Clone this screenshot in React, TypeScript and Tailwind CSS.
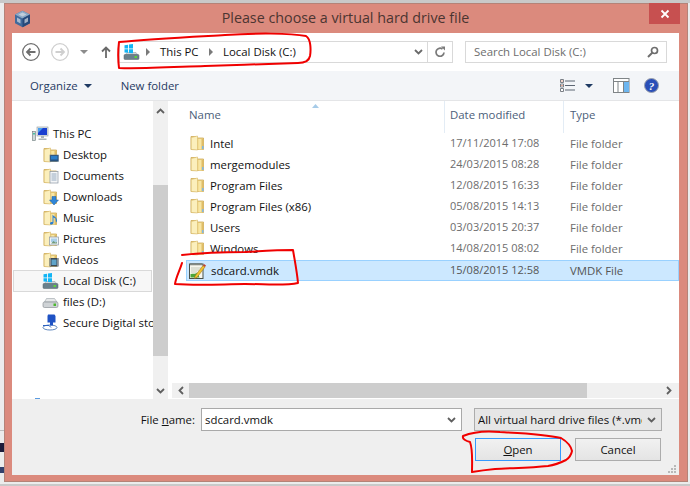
import React from "react";

const Folder = ({ children }: { children?: React.ReactNode }) => (
  <svg width="16" height="16" viewBox="0 0 16 16" className="shrink-0">
    <path d="M1 1.5h5l1 1.5h6.5v11.5H1z" fill="#f0d684" stroke="#cdaa58" strokeWidth="0.8" />
    <path d="M1.2 2.5 7.5 1v14l-6.3-.5z" fill="#fbefbc" stroke="#d8b968" strokeWidth="0.6" />
    <path d="M8.5 4h4v10.5h-4z" fill="#f8e6a4" />
    <path d="M11.5 4h2v10.5h-2z" fill="#dfbd68" />
    {children}
  </svg>
);

const PlainFolder = () => (
  <Folder>
    <path d="M12 11h1.5v3H12z" fill="#7fb8e6" />
  </Folder>
);

const DesktopFolder = () => (
  <Folder>
    <rect x="7" y="8" width="8.5" height="6.5" fill="#26517f" stroke="#56708a" strokeWidth="0.6" />
    <rect x="8" y="9" width="6.5" height="3.5" fill="#2b7ec9" />
  </Folder>
);
const DocsFolder = () => (
  <Folder>
    <rect x="7" y="3.5" width="8" height="11.5" fill="#f4f6f8" stroke="#8a96a3" strokeWidth="0.7" />
    <path d="M8.5 6h5M8.5 8h5M8.5 10h5M8.5 12h5" stroke="#8aa0b8" strokeWidth="0.9" />
  </Folder>
);
const DownFolder = () => (
  <Folder>
    <path d="M9 7.5h4v3.5h2.5L11 16l-4.5-5H9z" fill="#2f86d8" stroke="#1e5fa6" strokeWidth="0.5" />
  </Folder>
);
const MusicFolder = () => (
  <Folder>
    <path d="M9.5 4.5c1 2 4.5 2.5 4.5 6 0 1-.5 1.5-1 2l-.5-4-2-1V13c0 1.5-3.5 2.2-3.5.5 0-1.3 1.5-1.7 2.5-1.5z" fill="#2a7fd4" />
  </Folder>
);
const PicFolder = () => (
  <Folder>
    <rect x="6.5" y="6" width="9" height="8" fill="#eef2f5" stroke="#8a96a3" strokeWidth="0.7" />
    <rect x="8" y="7.5" width="6" height="3.5" fill="#a9cfe9" />
    <path d="M8 12.5l2.5-2.5 2 1.5 1.5-.5v1.5z" fill="#6f9a7e" />
  </Folder>
);
const VidFolder = () => (
  <Folder>
    <rect x="6.5" y="6" width="9" height="8.5" fill="#3d4a55" />
    <rect x="8.5" y="7.5" width="5" height="5.5" fill="#5fa4c9" />
    <path d="M7 7h1M7 9h1M7 11h1M7 13h1M14 7h1M14 9h1M14 11h1M14 13h1" stroke="#e6e6e6" strokeWidth="0.9" />
  </Folder>
);

const DriveBase = () => (
  <>
    <path d="M2.5 10.5 4 8.5h9l1.5 2z" fill="#cfd6da" stroke="#8d979d" strokeWidth="0.5" />
    <rect x="1" y="10.5" width="15" height="5" rx="1" fill="#69808c" stroke="#55636b" strokeWidth="0.5" />
    <rect x="11.5" y="12" width="2.5" height="2" fill="#5fd13d" />
  </>
);
const SysDrive = () => (
  <svg width="17" height="17" viewBox="0 0 17 17" className="shrink-0">
    <DriveBase />
    <path d="M1.5 1.2l3.6-.5v3.8H1.5zM6 .6l4-.6v4.5H6zM1.5 5.3h3.6v3.5L1.5 8.4zM6 5.3h4v4L6 8.9z" fill="#12b5f5" />
  </svg>
);
const DataDrive = () => (
  <svg width="17" height="16" viewBox="0 0 17 16" className="shrink-0">
    <path d="M2.5 8 4.5 4.5h8L15 8z" fill="#e6e8e9" stroke="#9aa2a7" strokeWidth="0.6" />
    <rect x="1" y="8" width="15" height="5.5" rx="1.5" fill="#cfd3d6" stroke="#7d858a" strokeWidth="0.6" />
    <rect x="11.5" y="9.5" width="2.5" height="2.5" fill="#4cb82e" />
  </svg>
);
const SdIcon = () => (
  <svg width="17" height="17" viewBox="0 0 17 17" className="shrink-0">
    <ellipse cx="8" cy="13.5" rx="7" ry="2.5" fill="none" stroke="#4c78b5" strokeWidth="0.9" />
    <path d="M6 .5h6.5L13.5 2v6.5H11v3H8v-3H5.5V2z" fill="#1f52c4" />
    <path d="M1 11.5h6l2 2" stroke="#2d62c0" strokeWidth="1" fill="none" />
  </svg>
);
const PcIcon = () => (
  <svg width="17" height="16" viewBox="0 0 17 16" className="shrink-0">
    <rect x="0.5" y="5.5" width="3" height="9" fill="#cfd8d8" stroke="#69797a" strokeWidth="0.6" />
    <rect x="1" y="7" width="2" height="1.5" fill="#49c1a4" />
    <rect x="5" y="1" width="11" height="9" fill="#e4e8ea" stroke="#8b969c" strokeWidth="0.6" />
    <rect x="6" y="2" width="9" height="7" fill="#1a3fd0" />
    <path d="M6 2h5L6 7z" fill="#4aa0ee" />
    <path d="M9 10h3v2H9zM6.5 12.5h8V14h-8z" fill="#a9b3b8" />
  </svg>
);
const FileIcon = () => (
  <svg width="18" height="18" viewBox="0 0 18 18" className="shrink-0">
    <rect x="1.5" y="2" width="13.5" height="14.5" fill="#f7f7ee" stroke="#48504a" strokeWidth="1" />
    <path d="M3 1v2.5M5 1v2.5M7 1v2.5M9 1v2.5M11 1v2.5M13 1v2.5" stroke="#5a625c" strokeWidth="0.8" />
    <path d="M3 6h10M3 8h8M3 10h6" stroke="#b9bfae" strokeWidth="0.8" />
    <path d="M2.5 15.5V12c3-.5 6 0 7-1.5l2 5z" fill="#4da53a" />
    <path d="M7 14 15 3.5 17 5 9 15.500l-2.500 1z" fill="#f1c232" stroke="#8d6b15" strokeWidth="0.5" />
    <path d="M15 3.5l1-1.5 2 1.5L17 5z" fill="#c4402f" />
  </svg>
);

const Cube = () => (
  <svg width="17" height="18" viewBox="0 0 17 18">
    <path d="M8.5.8 16 4.5v8.8l-7.5 4-7.500-4V4.500z" fill="#3f6a9c" />
    <path d="M8.5.8 16 4.5l-7.5 4-7.500-4z" fill="#8ca9c6" />
    <path d="M8.5 8.5v8.8l7.500-4V4.500z" fill="#26497a" />
    <path d="M4.5 4.5 8.5 2.5l4 2-4 2zM3 7.5l3.5 2v4L3 11.5zM10.5 9.5l3.500-2v4l-3.500 2z" fill="#d5dde6" opacity="0.7" />
  </svg>
);

const ChevR = () => (
  <svg width="6" height="8" viewBox="0 0 6 8" className="shrink-0">
    <path d="M1 0l4 4-4 4z" fill="#7a7a7a" />
  </svg>
);
const ChevDown = ({ c = "#5f5f5f" }: { c?: string }) => (
  <svg width="9" height="6" viewBox="0 0 9 6" className="shrink-0">
    <path d="M1 1l3.5 3.5L8 1" fill="none" stroke={c} strokeWidth="1.8" />
  </svg>
);
const Tri = ({ c = "#1f3a63" }: { c?: string }) => (
  <svg width="8" height="4" viewBox="0 0 8 4" className="shrink-0">
    <path d="M0 0h8L4 4z" fill={c} />
  </svg>
);

const navItems: [React.ReactNode, string][] = [
  [<DesktopFolder />, "Desktop"],
  [<DocsFolder />, "Documents"],
  [<DownFolder />, "Downloads"],
  [<MusicFolder />, "Music"],
  [<PicFolder />, "Pictures"],
  [<VidFolder />, "Videos"],
];

const files = [
  ["Intel", "17/11/2014 17:08"],
  ["mergemodules", "24/03/2015 08:28"],
  ["Program Files", "12/08/2015 16:33"],
  ["Program Files (x86)", "05/08/2015 14:13"],
  ["Users", "03/03/2015 20:37"],
  ["Windows", "14/08/2015 08:02"],
];

export default function App() {
  return (
    <div
      className="relative w-[690px] h-[486px] overflow-hidden bg-[#ececec] pt-[3px] pl-[4px] text-[11.4px] text-[#111111]"
      style={{ fontFamily: '"Open Sans", "Noto Sans", sans-serif' }}
    >
      {/* background window fragments */}
      <div className="absolute left-0 top-0 w-full h-[3px] bg-[#c9c9c9]" />
      <div className="absolute left-0 top-[430px] w-[4px] h-[1px] bg-[#bdbdbd]" />
      <div className="absolute left-0 top-[443px] w-[4px] h-[9px] bg-[#1b1b3a]" />
      <div className="absolute left-0 top-[467px] w-[4px] h-[6px] bg-[#33406b]" />
      <div className="absolute left-0 bottom-0 w-full h-[2px] bg-[#c9c9c9]" />

      <div className="relative w-[684px] h-[479px] border border-[#b48378] bg-[#db8a7d] flex flex-col pl-[7px] pr-[8px] pb-[6px]">
        {/* title bar */}
        <div className="relative h-[29px] shrink-0 flex items-center justify-center text-[14.3px] text-[#4b3531]">
          <div className="absolute left-[2px] top-[6px]">
            <Cube />
          </div>
          <span className="pb-[2px]">Please choose a virtual hard drive file</span>
          <div className="absolute right-[-1px] top-[-1px] w-[31px] h-[21px] bg-[#c75050] flex items-center justify-center">
            <svg width="10" height="10" viewBox="0 0 10 10">
              <path d="M1.5 1.5l7 7M8.5 1.5l-7 7" stroke="#fff" strokeWidth="1.8" />
            </svg>
          </div>
        </div>

        <div className="flex-1 flex flex-col bg-white min-h-0">
          {/* address row */}
          <div className="h-[38px] shrink-0 flex items-start pt-[8px]">
            <div className="w-[107px] shrink-0 h-[22px] flex items-center pl-[10px]">
              <svg width="18" height="18" viewBox="0 0 18 18" className="shrink-0">
                <circle cx="9" cy="9" r="8.3" fill="#fff" stroke="#6e6e6e" strokeWidth="1.3" />
                <path d="M13.5 9h-8M8.5 5.5 5 9l3.5 3.5" fill="none" stroke="#6e6e6e" strokeWidth="1.8" />
              </svg>
              <svg width="18" height="18" viewBox="0 0 18 18" className="shrink-0 ml-[11px]">
                <circle cx="9" cy="9" r="8.3" fill="#fff" stroke="#cfcfcf" strokeWidth="1.3" />
                <path d="M4.5 9h8M9.5 5.5 13 9l-3.5 3.5" fill="none" stroke="#cfcfcf" strokeWidth="1.8" />
              </svg>
              <div className="ml-[11px]">
                <Tri c="#8c8c8c" />
              </div>
              <svg width="10" height="12" viewBox="0 0 10 12" className="shrink-0 ml-[13px]">
                <path d="M5 12V1.5M1 5.5l4-4 4 4" fill="none" stroke="#6a6a6a" strokeWidth="1.8" />
              </svg>
            </div>
            <div className="w-[334px] h-[22px] shrink-0 border border-[#d9d9d9] flex items-center pl-[3px]">
              <SysDrive />
              <div className="ml-[5px]"><ChevR /></div>
              <span className="ml-[9px] w-[48px]">This PC</span>
              <ChevR />
              <span className="ml-[9px]">Local Disk (C:)</span>
              <div className="ml-auto flex items-center h-full">
                <ChevDown c="#6a6a6a" />
                <div className="ml-[4px] w-[25px] h-full border-l border-[#d9d9d9] flex items-center justify-center">
                  <svg width="12" height="12" viewBox="0 0 12 12">
                    <path d="M10 6.5a4 4 0 1 1-1.5-3.4" fill="none" stroke="#7a7a7a" strokeWidth="1.7" />
                    <path d="M7 .5h4v4z" fill="#7a7a7a" />
                  </svg>
                </div>
              </div>
            </div>
            <div className="ml-[12px] w-[202px] h-[22px] shrink-0 border border-[#d9d9d9] flex items-center pl-[8px] pr-[7px] text-[#6d6d6d]">
              <span>Search Local Disk (C:)</span>
              <svg width="12" height="12" viewBox="0 0 12 12" className="ml-auto">
                <circle cx="7.5" cy="4.5" r="3" fill="none" stroke="#6e6e6e" strokeWidth="1.7" />
                <path d="M5.5 6.5 1 11" stroke="#6e6e6e" strokeWidth="2" />
              </svg>
            </div>
          </div>

          {/* toolbar */}
          <div className="h-[30px] shrink-0 bg-[#f3f5f8] border-b border-[#e4e5e7] flex items-center pl-[18px] text-[#1f3a63]">
            <span>Organize</span>
            <div className="ml-[6px]"><Tri /></div>
            <span className="ml-[29px]">New folder</span>
            <div className="ml-auto flex items-center pr-[20px]">
              <svg width="15" height="13" viewBox="0 0 15 13" className="shrink-0">
                <path d="M.5.5h3v3h-3zM.5 5h3v3h-3zM.5 9.5h3v3h-3z" fill="#fff" stroke="#7a7f86" />
                <path d="M5 2h10M5 6.5h10M5 11h10" stroke="#5d6673" strokeWidth="1" />
                <path d="M1.5 1.5h1v1h-1zM1.5 6h1v1h-1z" fill="#d0542f" />
              </svg>
              <div className="ml-[10px]"><Tri /></div>
              <svg width="17" height="15" viewBox="0 0 17 15" className="shrink-0 ml-[20px]">
                <rect x=".5" y=".5" width="15.5" height="14" fill="#fff" stroke="#7f8487" />
                <path d="M.5 3.5H16M5 3.5V14.500M10.500 3.500v11" stroke="#7f8487" />
                <rect x="11" y="4" width="5" height="10" fill="#6db6f0" />
              </svg>
              <svg width="15" height="15" viewBox="0 0 15 15" className="shrink-0 ml-[14px]">
                <circle cx="7.5" cy="7.5" r="7" fill="#2a4fb8" stroke="#9ba1ac" strokeWidth="1" />
                <text x="7.5" y="11.5" textAnchor="middle" fontSize="11" fontStyle="italic" fontWeight="700" fill="#fff" fontFamily="Liberation Serif">?</text>
              </svg>
            </div>
          </div>

          {/* panes */}
          <div className="h-[298px] shrink-0 flex">
            {/* nav */}
            <div className="relative w-[141px] shrink-0 pt-[22px] overflow-hidden">
              <div className="h-[21px] flex items-center pl-[20px] gap-[4px]">
                <PcIcon />
                <span>This PC</span>
              </div>
              {navItems.map(([icon, label]) => (
                <div key={label} className="h-[21px] flex items-center pl-[31px] gap-[4px]">
                  {icon}
                  <span>{label}</span>
                </div>
              ))}
              <div className="h-[22px] -mb-[1px] ml-[1px] mr-[1px] flex items-center pl-[28px] gap-[4px] border border-[#d9d9d9] bg-[#f7f7f7]">
                <SysDrive />
                <span>Local Disk (C:)</span>
              </div>
              <div className="h-[21px] flex items-center pl-[30px] gap-[4px]">
                <DataDrive />
                <span>files (D:)</span>
              </div>
              <div className="h-[21px] flex items-center pl-[30px] gap-[4px] whitespace-nowrap">
                <SdIcon />
                <span>Secure Digital storage</span>
              </div>
              <div className="absolute left-[23px] bottom-0 w-[5px] h-[1px] bg-[#5a9be0]" />
            </div>
            {/* nav scrollbar */}
            <div className="w-[15px] shrink-0 bg-[#f0f0f0] flex flex-col items-center">
              <div className="h-[84px] shrink-0 w-full flex justify-center pt-[7px]">
                <svg width="9" height="6" viewBox="0 0 9 6"><path d="M1 5l3.5-3.5L8 5" fill="none" stroke="#606060" strokeWidth="1.8" /></svg>
              </div>
              <div className="h-[171px] w-full shrink-0 bg-[#cdcdcd]" />
              <div className="flex-1 flex items-end pb-[5px]"><ChevDown /></div>
            </div>
            {/* file list */}
            <div className="flex-1 min-w-0 ml-[4px] flex flex-col">
              <div className="flex-1 min-h-0 relative">
                <div className="absolute left-[140px] top-[3px]">
                  <svg width="7" height="4" viewBox="0 0 7 4"><path d="M3.5 0 7 4H0z" fill="#a6cbe8" /></svg>
                </div>
                <div className="h-[32px] flex text-[#4c607a]">
                  <div className="w-[272px] pl-[17px] pt-[5px]">Name</div>
                  <div className="w-[119px] pl-[5px] pt-[5px] border-l border-[#e3ecf5]">Date modified</div>
                  <div className="pl-[6px] pt-[5px] border-l border-[#e3ecf5]">Type</div>
                </div>
                {files.map(([n, d]) => (
                  <div key={n} className="h-[21px] flex items-center">
                    <div className="w-[272px] shrink-0 pl-[18px] flex items-center gap-[4px]">
                      <PlainFolder />
                      <span>{n}</span>
                    </div>
                    <div className="w-[120px] shrink-0 pl-[6px] text-[11px] text-[#6d6d6d]">{d}</div>
                    <div className="pl-[6px] text-[#6d6d6d]">File folder</div>
                  </div>
                ))}
                <div className="h-[21px] mt-[1px] ml-[14px] flex items-center border border-[#99d1ff] bg-[#cce8ff]">
                  <div className="w-[257px] shrink-0 pl-[1px] flex items-center gap-[5px]">
                    <FileIcon />
                    <span>sdcard.vmdk</span>
                  </div>
                  <div className="w-[120px] shrink-0 pl-[6px] text-[11px] text-[#555]">15/08/2015 12:58</div>
                  <div className="pl-[6px] text-[#555]">VMDK File</div>
                </div>
              </div>
              <div className="h-[15px] shrink-0 mb-[1px] bg-[#f0f0f0] flex items-center">
                <div className="w-[17px] shrink-0 flex justify-center">
                  <svg width="6" height="9" viewBox="0 0 6 9"><path d="M5 1 1.5 4.500 5 8" fill="none" stroke="#606060" strokeWidth="1.8" /></svg>
                </div>
                <div className="w-[398px] h-full bg-[#cdcdcd]" />
                <div className="flex-1 flex justify-end pr-[7px]">
                  <svg width="6" height="9" viewBox="0 0 6 9"><path d="M1 1l3.5 3.500L1 8" fill="none" stroke="#606060" strokeWidth="1.8" /></svg>
                </div>
              </div>
            </div>
          </div>

          {/* bottom */}
          <div className="relative flex-1 bg-[#efefef] pt-[9px]">
            <div className="flex items-center h-[23px]">
              <div className="w-[183px] shrink-0 text-right">
                File <span className="underline">n</span>ame:
              </div>
              <div className="ml-[6px] w-[261px] h-[23px] shrink-0 bg-white border border-[#a9a9a9] flex items-center pl-[3px] pr-[5px]">
                <span>sdcard.vmdk</span>
                <div className="ml-auto"><ChevDown /></div>
              </div>
              <div className="ml-[12px] w-[188px] h-[23px] shrink-0 bg-[#e6e6e6] border border-[#acacac] flex items-center pl-[3px] pr-[5px]">
                <span className="w-[164px] overflow-hidden whitespace-nowrap">All virtual hard drive files (*.vmdk)</span>
                <div className="ml-auto"><ChevDown /></div>
              </div>
            </div>
            <div className="flex mt-[7px] pl-[463px]">
              <div className="w-[86px] h-[23px] shrink-0 border border-[#3399ff] bg-gradient-to-b from-[#f1f1f1] to-[#e4e4e4] flex items-center justify-center">
                <span><span className="underline">O</span>pen</span>
              </div>
              <div className="ml-[14px] w-[86px] h-[23px] shrink-0 border border-[#acacac] bg-gradient-to-b from-[#f1f1f1] to-[#e4e4e4] flex items-center justify-center">
                Cancel
              </div>
            </div>
            <svg width="9" height="9" viewBox="0 0 9 9" className="absolute right-[2px] bottom-[1px]">
              <path d="M6 0h2v2H6zM3 3h2v2H3zM6 3h2v2H6zM0 6h2v2H0zM3 6h2v2H3zM6 6h2v2H6z" fill="#b8b8b8" />
            </svg>
          </div>
        </div>
      </div>

      {/* red pen annotations */}
      <svg width="690" height="486" viewBox="0 0 690 486" className="absolute left-0 top-0 pointer-events-none" fill="none" stroke="#f00000" strokeWidth="2" strokeLinejoin="round" strokeLinecap="round">
        <path d="M119 42C150 39 190 37 225 35C255 33 290 33 306 36C311 39 311 50 310 56C309 61 305 63 298 63C270 64 235 65 205 66C175 67 140 69 119 68C118 60 118 50 119 42Z" />
        <path d="M182 255C200 253 225 252 245 252C262 251 280 250 293 250C295 262 297 272 298 283C285 286 265 284 245 284C225 284 200 286 175 284C176 277 180 270 182 263" />
        <path d="M463 436C475 431 490 431 500 432C520 433 545 434 561 438C566 441 571 446 572 451C571 456 569 458 566 460C560 463 555 465 548 466C530 468 510 468 495 469C485 470 478 471 472 472C472 462 473 450 470 442C466 441 462 439 463 436Z" />
      </svg>
    </div>
  );
}
